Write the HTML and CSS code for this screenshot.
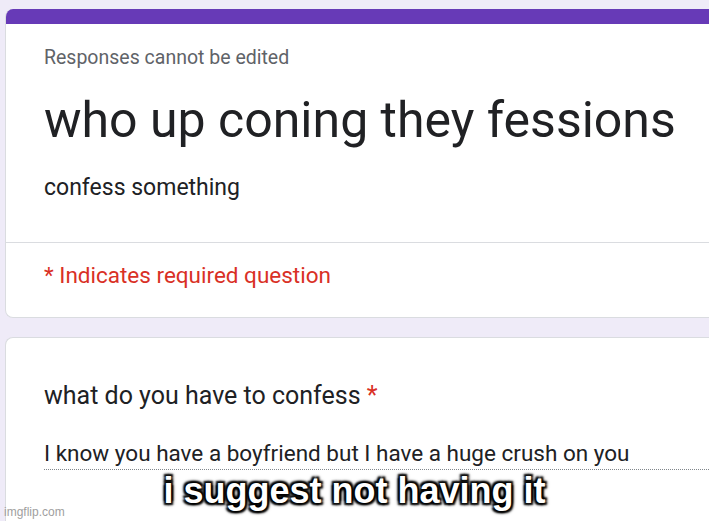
FILE: index.html
```html
<!DOCTYPE html>
<html>
<head>
    <link rel="stylesheet" href="styles.css">
    <title>who up coning they fessions</title>
</head>
<body>
    <div class="page">
        <div class="card head-card">
            <div class="head-bar"></div>
            <div class="head-top">
                <p class="note">Responses cannot be edited</p>
                <h1 class="title">who up coning they fessions</h1>
                <p class="desc">confess something</p>
            </div>
            <div class="head-bottom">
                <p class="required">* Indicates required question</p>
            </div>
        </div>
        <div class="card question-card">
            <p class="question">what do you have to confess <span class="star">*</span></p>
            <div class="answer">I know you have a boyfriend but I have a huge crush on you</div>
        </div>
    </div>
    <div class="caption">i suggest not having it</div>
    <div class="watermark">imgflip.com</div>
</body>
</html>
```

FILE: styles.css
```css
html, body {
    margin: 0;
    height: 100%;
}
body {
    background-color: #efebf8;
    font-family: Roboto, "Liberation Sans", Arial, sans-serif;
    overflow: hidden;
    position: relative;
}
p {
    margin: 0;
}
.page {
    padding: 9px 0 0 5px;
    display: flex;
    flex-direction: column;
    gap: 19px;
    width: 704px;
    overflow: hidden;
}
.card {
    background-color: white;
    border: 1px solid #dadce0;
    border-right: none;
    width: 760px;
    flex-shrink: 0;
    border-radius: 8px 0 0 8px;
}
.head-card {
    border-top: none;
    overflow: hidden;
    height: 308px;
}
.head-bar {
    height: 15px;
    background-color: #673ab7;
}
.head-top {
    padding: 22px 0 0 38px;
    height: 219px;
    box-sizing: border-box;
    border-bottom: 1px solid #dadce0;
}
.note {
    font-size: 19.5px;
    color: #5f6368;
    line-height: 24px;
}
.title {
    margin: 20px 0 0;
    font-size: 50px;
    font-weight: 400;
    color: #202124;
    line-height: 60px;
}
.desc {
    margin-top: 23px;
    font-size: 23px;
    color: #202124;
    line-height: 30px;
}
.head-bottom {
    padding: 17px 0 0 38px;
}
.required {
    font-size: 22.5px;
    color: #d93025;
    line-height: 30px;
}
.question-card {
    border-bottom: none;
    border-radius: 8px 0 0 0;
    height: 200px;
    padding: 41.5px 0 0 38px;
    box-sizing: border-box;
}
.question {
    font-size: 25px;
    color: #202124;
    line-height: 32px;
}
.star {
    color: #d93025;
}
.answer {
    margin-top: 26.5px;
    font-size: 22.5px;
    color: #202124;
    line-height: 30px;
    padding-bottom: 1px;
    border-bottom: 1px dotted #80868b;
}
.caption {
    position: absolute;
    left: 0;
    right: 0;
    top: 470px;
    text-align: center;
    font-family: "Liberation Sans", Arial, sans-serif;
    font-weight: bold;
    font-size: 36px;
    color: white;
    text-shadow: 2px 2px 2px #000, -2px -2px 2px #000, 2px -2px 2px #000, -2px 2px 2px #000, 0 0 5px #000;
}
.watermark {
    position: absolute;
    left: 4px;
    bottom: 2px;
    font-family: "Liberation Sans", Arial, sans-serif;
    font-size: 12px;
    color: #a0a0a0;
}
```
